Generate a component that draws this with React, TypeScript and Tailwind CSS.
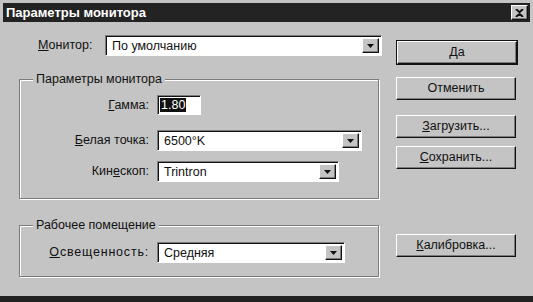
import React from "react";

const font = { fontFamily: '"Liberation Sans", Arial, sans-serif' };

function Raised({
  children,
  className = "",
}: {
  children: React.ReactNode;
  className?: string;
}) {
  return (
    <div
      className={`flex items-center justify-center border border-t-white border-l-white border-r-[#111] border-b-[#111] bg-[#c4c4c4] shadow-[inset_-1px_-1px_0_#7c7c7c] ${className}`}
    >
      {children}
    </div>
  );
}

function Combo({ value, w }: { value: string; w: string }) {
  return (
    <div
      className={`flex h-[21px] ${w} items-stretch border border-t-[#7c7c7c] border-l-[#7c7c7c] border-r-white border-b-white bg-white shadow-[inset_1px_1px_0_#111]`}
    >
      <div className="flex flex-1 items-center pl-[6px] pt-[1px] text-[12.5px] text-[#111]">
        {value}
      </div>
      <Raised className="my-[2px] mr-[2px] w-[17px]">
        <svg width="7" height="4" viewBox="0 0 7 4">
          <path d="M0 0h7L3.5 4z" fill="#111" />
        </svg>
      </Raised>
    </div>
  );
}

function Label({
  children,
  className = "",
}: {
  children: React.ReactNode;
  className?: string;
}) {
  return (
    <div className={`w-[137px] shrink-0 pr-[8px] text-right text-[12.5px] text-[#111] ${className}`}>
      {children}
    </div>
  );
}

function Button({
  children,
  className = "",
}: {
  children: React.ReactNode;
  className?: string;
}) {
  return (
    <Raised className={`h-[23px] w-[120px] text-[12.5px] text-[#111] ${className}`}>
      {children}
    </Raised>
  );
}

export default function App() {
  return (
    <div
      className="flex h-[302px] w-[533px] flex-col overflow-hidden border-b-[6px] border-[#222] bg-[#c4c4c4] pl-[3px] pr-[3px] pt-[3px]"
      style={font}
    >
      {/* Title bar */}
      <div className="flex h-[19px] shrink-0 items-center justify-between bg-[#232323] pl-[3px] pr-[2px]">
        <span className="text-[13px] font-bold text-white">Параметры монитора</span>
        <Raised className="h-[15px] w-[17px]">
          <svg width="9" height="8" viewBox="0 0 9 8">
            <path d="M1 0l3.5 3.2L8 0M1 8l3.5-3.2L8 8" stroke="#111" strokeWidth="2" fill="none" />
          </svg>
        </Raised>
      </div>

      <div className="flex flex-1 pl-[16px] pt-[13px]">
        {/* Left column */}
        <div className="flex w-[363px] shrink-0 flex-col">
          <div className="flex h-[21px] items-center">
            <span className="ml-[19px] w-[67px] text-[12.5px] text-[#111]">
              <u>М</u>онитор:
            </span>
            <Combo value="По умолчанию" w="w-[277px]" />
          </div>

          <fieldset className="mt-[16px] w-[360px] border border-[#7c7c7c] pb-[16px] pt-[8px] shadow-[inset_1px_1px_0_#fff,1px_1px_0_#fff]">
            <legend className="ml-[13px] bg-[#c4c4c4] px-[3px] text-[12.5px] leading-[15px] text-[#111]">
              Параметры монитора
            </legend>
            <div className="flex h-[20px] items-center">
              <Label>
                <u>Г</u>амма:
              </Label>
              <div className="flex h-[20px] w-[44px] items-center border border-t-[#7c7c7c] border-l-[#7c7c7c] border-r-white border-b-white bg-white pl-[2px] shadow-[inset_1px_1px_0_#111]">
                <span className="bg-[#111] px-[1px] text-[12.5px] leading-[14px] text-white">1.80</span>
              </div>
            </div>
            <div className="mt-[15px] flex items-center">
              <Label>
                <u>Б</u>елая точка:
              </Label>
              <Combo value="6500°K" w="w-[205px]" />
            </div>
            <div className="mt-[10px] flex items-center">
              <Label>
                Кин<u>е</u>скоп:
              </Label>
              <Combo value="Trintron" w="w-[182px]" />
            </div>
          </fieldset>

          <fieldset className="mt-[19px] w-[360px] border border-[#7c7c7c] pb-[13px] pt-[9px] shadow-[inset_1px_1px_0_#fff,1px_1px_0_#fff]">
            <legend className="ml-[13px] bg-[#c4c4c4] px-[3px] text-[12.5px] leading-[15px] text-[#111]">
              Рабочее помещение
            </legend>
            <div className="flex items-center">
              <Label className="tracking-[0.8px]">
                <u>О</u>свещенность:
              </Label>
              <Combo value="Средняя" w="w-[188px]" />
            </div>
          </fieldset>
        </div>

        {/* Right column */}
        <div className="flex flex-col pl-[14px] pt-[5px]">
          <div className="border border-[#111]">
            <Button className="h-[21px] w-[118px]">Да</Button>
          </div>
          <Button className="mt-[12px]">Отменить</Button>
          <Button className="mt-[15px]">
            <span>
              <u>З</u>агрузить...
            </span>
          </Button>
          <Button className="mt-[8px]">
            <span>
              <u>С</u>охранить...
            </span>
          </Button>
          <Button className="mt-[65px] h-[22px]">
            <span>
              <u>К</u>алибровка...
            </span>
          </Button>
        </div>
      </div>
    </div>
  );
}
